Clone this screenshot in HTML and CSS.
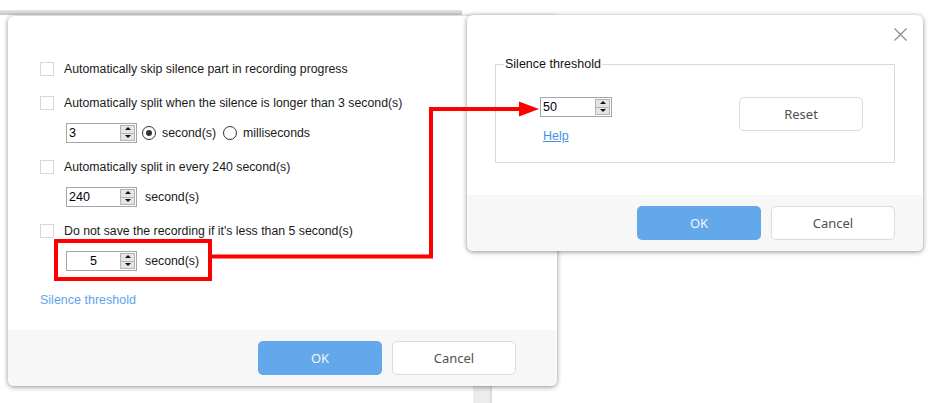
FILE: index.html
```html
<!DOCTYPE html>
<html lang="en">
<head>
  <meta charset="UTF-8" />
  <title>Recording options</title>
  <link rel="stylesheet" href="styles.css">
</head>
<body>

  <!-- window behind the dialogs -->
  <div class="back-strip"></div>
  <div class="back-block"></div>

  <!-- recording options dialog -->
  <div class="dialog dialog-main">
    <div class="dlg-body">
      <div class="opt">
        <span class="check"></span>
        <span>Automatically skip silence part in recording progress</span>
      </div>

      <div class="opt">
        <span class="check"></span>
        <span>Automatically split when the silence is longer than 3 second(s)</span>
      </div>
      <div class="sub">
        <div class="spin"><span class="spin-val">3</span><span class="spin-btns"><i class="up"></i><i class="down"></i></span></div>
        <span class="radio on"></span><span class="radio-label">second(s)</span>
        <span class="radio"></span><span class="radio-label">milliseconds</span>
      </div>

      <div class="opt">
        <span class="check"></span>
        <span>Automatically split in every 240 second(s)</span>
      </div>
      <div class="sub">
        <div class="spin"><span class="spin-val">240</span><span class="spin-btns"><i class="up"></i><i class="down"></i></span></div>
        <span class="unit">second(s)</span>
      </div>

      <div class="opt">
        <span class="check"></span>
        <span>Do not save the recording if it's less than 5 second(s)</span>
      </div>
      <div class="sub">
        <div class="spin"><span class="spin-val center">5</span><span class="spin-btns"><i class="up"></i><i class="down"></i></span></div>
        <span class="unit">second(s)</span>
      </div>

      <a class="link" href="#">Silence threshold</a>
    </div>
    <div class="dlg-footer footer-main">
      <button class="btn btn-ok">OK</button>
      <button class="btn btn-cancel">Cancel</button>
    </div>
  </div>

  <!-- silence threshold dialog -->
  <div class="dialog dialog-threshold">
    <div class="dlg-head">
      <svg class="close" width="13" height="13" viewBox="0 0 13 13">
        <path d="M0.5 0.5 L12.5 12.5 M12.5 0.5 L0.5 12.5" stroke="#8a8a8a" stroke-width="1.2" fill="none"/>
      </svg>
    </div>
    <div class="th-body">
      <fieldset class="th-box">
        <legend>Silence threshold</legend>
        <div class="th-row">
          <div class="th-left">
            <div class="spin"><span class="spin-val">50</span><span class="spin-btns"><i class="up"></i><i class="down"></i></span></div>
            <a class="help" href="#">Help</a>
          </div>
          <button class="btn btn-reset">Reset</button>
        </div>
      </fieldset>
    </div>
    <div class="dlg-footer footer-threshold">
      <button class="btn btn-ok">OK</button>
      <button class="btn btn-cancel">Cancel</button>
    </div>
  </div>

  <!-- red annotation -->
  <svg class="annotation" width="936" height="403" viewBox="0 0 936 403">
    <rect x="56" y="241" width="154" height="38" fill="none" stroke="#ff0000" stroke-width="4"/>
    <polyline points="210,256.5 431,256.5 431,109 522,109" fill="none" stroke="#ff0000" stroke-width="4"/>
    <polygon points="519,101.5 539,109 519,116.5" fill="#ff0000"/>
  </svg>

</body>
</html>
```

FILE: styles.css
```css
body {
  margin: 0;
  width: 936px;
  height: 403px;
  overflow: hidden;
  position: relative;
  background: #fff;
  font-family: "Liberation Sans", Arial, sans-serif;
  font-size: 12.3px;
  color: #1a1a1a;
}

.back-strip {
  position: absolute;
  left: 0;
  top: 10px;
  width: 462px;
  height: 5px;
  background: linear-gradient(#e6e6e6, #c4c4c4);
}

.back-block {
  position: absolute;
  left: 473px;
  top: 386px;
  width: 17px;
  height: 17px;
  background: #ececec;
  border-right: 2px solid #dcdcdc;
}

.dialog {
  position: absolute;
  background: #fff;
  border-radius: 6px;
  box-shadow: 0 1px 5px rgba(0, 0, 0, 0.45);
  overflow: hidden;
  display: flex;
  flex-direction: column;
}

.dialog-main {
  left: 8px;
  top: 16px;
  width: 549px;
  height: 370px;
}

.dialog-threshold {
  left: 467px;
  top: 15px;
  width: 456px;
  height: 236px;
  z-index: 2;
}

.dlg-body {
  flex: 1;
  padding: 43px 0 0 32px;
}

.opt {
  display: flex;
  align-items: center;
  height: 20px;
  margin-top: 14px;
}
.opt:first-child {
  margin-top: 0;
}

.check {
  width: 12px;
  height: 12px;
  border: 1px solid #d5d9df;
  margin-right: 10px;
  background: #fff;
}

.sub {
  display: flex;
  align-items: center;
  height: 20px;
  margin: 10px 0 0 26px;
}

.spin {
  display: flex;
  width: 71px;
  height: 20px;
  box-sizing: border-box;
  border: 1px solid #a6a6a6;
  background: #fff;
}

.spin-val {
  flex: 1;
  padding-left: 2px;
  line-height: 18px;
  font-size: 12.5px;
  color: #000;
}
.spin-val.center {
  text-align: center;
  padding-left: 0;
}

.spin-btns {
  width: 13px;
  margin: 1px 1px 1px 0;
  display: flex;
  flex-direction: column;
  border: 1px solid #b4b4b4;
  background: #e4e4e4;
}

.spin-btns i {
  flex: 1;
  position: relative;
}
.spin-btns i.up {
  border-bottom: 1px solid #b4b4b4;
}
.spin-btns i::after {
  content: "";
  position: absolute;
  left: 50%;
  top: 50%;
  margin: -2px 0 0 -3px;
  border-left: 3px solid transparent;
  border-right: 3px solid transparent;
}
.spin-btns i.up::after {
  border-bottom: 3px solid #111;
}
.spin-btns i.down::after {
  border-top: 3px solid #111;
}

.radio {
  width: 12px;
  height: 12px;
  border: 1px solid #333;
  border-radius: 50%;
  margin: 0 6px 0 5px;
  position: relative;
}
.radio.on::after {
  content: "";
  position: absolute;
  left: 3px;
  top: 3px;
  width: 6px;
  height: 6px;
  border-radius: 50%;
  background: #333;
}
.radio-label {
  margin-right: 2px;
}

.unit {
  margin-left: 8px;
}

.link {
  display: block;
  margin-top: 21px;
  color: #62a3ea;
  text-decoration: none;
  font-size: 12.5px;
  line-height: 16px;
}

.dlg-footer {
  height: 56px;
  box-sizing: border-box;
  background: #f7f7f7;
  display: flex;
  justify-content: flex-end;
  align-items: center;
  gap: 10px;
}
.footer-main {
  padding-right: 41px;
}
.footer-threshold {
  padding-right: 28px;
}

.btn {
  width: 124px;
  height: 34px;
  border-radius: 5px;
  font-family: "Noto Sans", sans-serif;
  font-size: 13px;
  padding: 0;
  box-sizing: border-box;
}
.btn-ok {
  background: #63a8ea;
  border: none;
  color: #f2f7fd;
}
.btn-cancel,
.btn-reset {
  background: #fff;
  border: 1px solid #d6dce4;
  color: #505050;
}

.dlg-head {
  height: 42px;
  box-sizing: border-box;
  display: flex;
  justify-content: flex-end;
  padding: 13px 16px 0 0;
}

.th-body {
  flex: 1;
  padding: 0 28px;
}

.th-box {
  margin: 0;
  padding: 0 0 19px 0;
  border: 1px solid #d6dade;
  height: 106px;
  box-sizing: border-box;
}
.th-box legend {
  margin-left: 8px;
  padding: 0 1px;
  font-size: 12.5px;
  line-height: 14px;
  color: #111;
}

.th-row {
  display: flex;
  align-items: flex-start;
  padding: 26px 0 0 44px;
}

.th-left {
  width: 72px;
  display: flex;
  flex-direction: column;
}
.th-left .spin {
  width: 72px;
}

.help {
  margin: 12px 0 0 3px;
  color: #4a92e4;
  font-size: 12.5px;
  line-height: 14px;
}

.btn-reset {
  margin-left: 127px;
}

.annotation {
  position: absolute;
  left: 0;
  top: 0;
  z-index: 3;
  pointer-events: none;
}
```
